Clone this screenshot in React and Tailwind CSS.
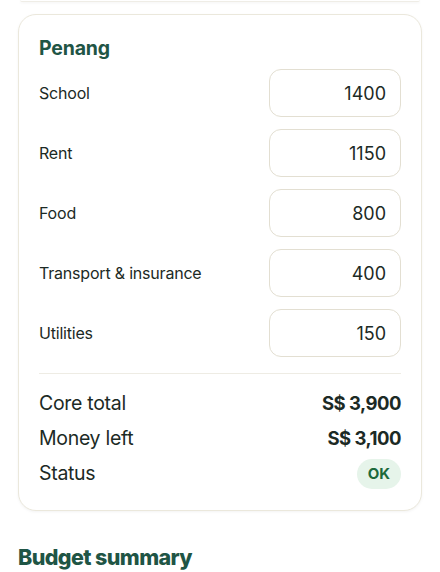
const items = [
  { label: "School", value: "1400" },
  { label: "Rent", value: "1150" },
  { label: "Food", value: "800" },
  { label: "Transport & insurance", value: "400" },
  { label: "Utilities", value: "150" },
];

export default function App() {
  return (
    <div className="min-h-screen bg-white px-[18px] font-['Inter',sans-serif] text-[#1c2a25]">
      <div className="h-[2px] mx-[2px] rounded-b-2xl border-b border-[#efede6] shadow-[0_1px_3px_rgba(0,0,0,0.05)]" />

      <div className="mt-[12px] rounded-[18px] border border-[#ebe8dc] bg-white px-[20px] pt-[20px] pb-[22px] shadow-[0_1px_3px_rgba(0,0,0,0.05)]">
        <h2 className="text-[19.5px] font-bold text-[#1f5545] leading-[26px] tracking-[-0.2px]">Penang</h2>

        <div className="mt-[8px] flex flex-col gap-[12px]">
          {items.map((it) => (
            <div key={it.label} className="flex items-center justify-between">
              <span className="text-[16px] tracking-[-0.2px]">{it.label}</span>
              <input
                readOnly
                value={it.value}
                className="h-[48px] w-[132px] rounded-[12px] border border-[#e3dfd2] bg-white px-[14px] text-right text-[18px] text-[#1c2a25] outline-none"
              />
            </div>
          ))}
        </div>

        <div className="mt-[16px] h-px bg-[#eeece4]" />

        <div className="mt-[16px] flex flex-col gap-[7px]">
          <div className="flex items-center justify-between h-[28px]">
            <span className="text-[19.5px] tracking-[-0.3px]">Core total</span>
            <span className="text-[18.5px] font-bold tracking-[-0.5px]">S$ 3,900</span>
          </div>
          <div className="flex items-center justify-between h-[28px]">
            <span className="text-[19.5px] tracking-[-0.3px]">Money left</span>
            <span className="text-[18.5px] font-bold tracking-[-0.5px]">S$ 3,100</span>
          </div>
          <div className="flex items-center justify-between h-[28px]">
            <span className="text-[19.5px] tracking-[-0.3px]">Status</span>
            <span className="flex h-[30px] items-center rounded-full bg-[#e6f4ea] px-[11px] text-[15px] font-bold text-[#1d6a3c]">OK</span>
          </div>
        </div>
      </div>

      <h2 className="mt-[30px] text-[21.5px] font-extrabold tracking-[-0.6px] text-[#1f5545]">Budget summary</h2>
    </div>
  );
}
